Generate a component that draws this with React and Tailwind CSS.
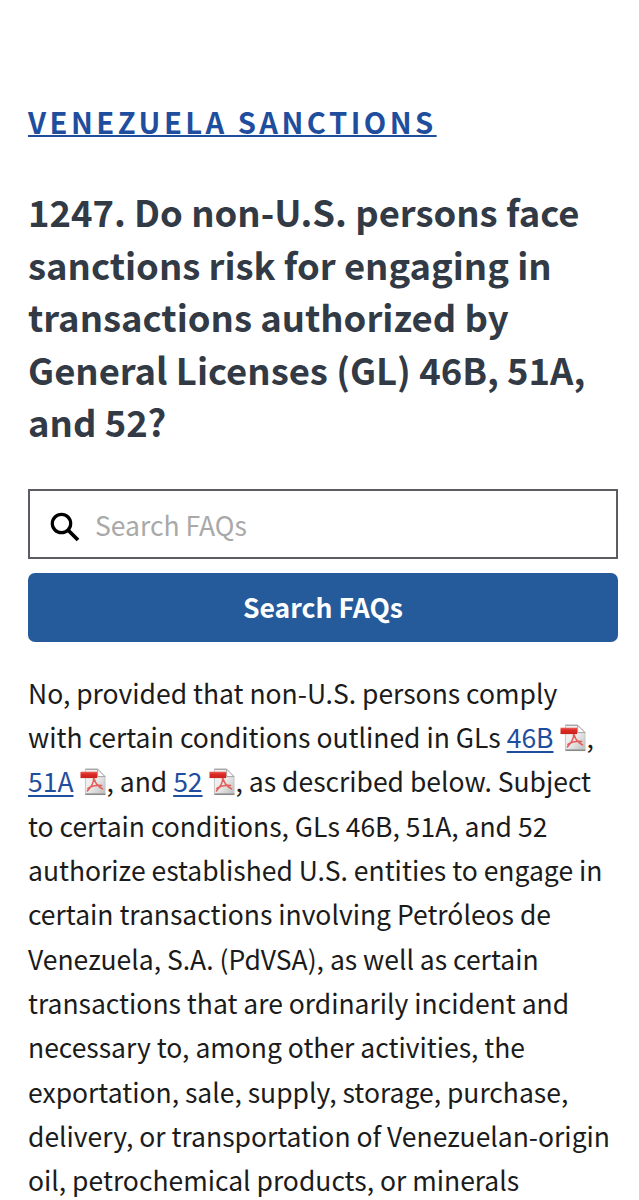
import React from 'react';

const title = [
  '1247. Do non-U.S. persons face',
  'sanctions risk for engaging in',
  'transactions authorized by',
  'General Licenses (GL) 46B, 51A,',
  'and 52?',
];

const rest = [
  'to certain conditions, GLs 46B, 51A, and 52',
  'authorize established U.S. entities to engage in',
  'certain transactions involving Petróleos de',
  'Venezuela, S.A. (PdVSA), as well as certain',
  'transactions that are ordinarily incident and',
  'necessary to, among other activities, the',
  'exportation, sale, supply, storage, purchase,',
  'delivery, or transportation of Venezuelan-origin',
  'oil, petrochemical products, or minerals',
];

function PdfIcon() {
  return (
    <svg className="ml-[6.5px] inline-block h-[28px] w-[26.5px] align-[-4px]" viewBox="0 0 27 28">
      <defs>
        <linearGradient id="page" x1="0" y1="0" x2="1" y2="1">
          <stop offset="0" stopColor="#f4f4f4" />
          <stop offset="0.5" stopColor="#ececec" />
          <stop offset="1" stopColor="#bdbdbd" />
        </linearGradient>
        <linearGradient id="band" x1="0" y1="0" x2="0" y2="1">
          <stop offset="0" stopColor="#ec5f57" />
          <stop offset="0.4" stopColor="#dc2b25" />
          <stop offset="1" stopColor="#c9211b" />
        </linearGradient>
      </defs>
      <path d="M5.5 1H18l7.5 7.5V26H5.5z" fill="url(#page)" stroke="#c4c4c4" strokeWidth="1" />
      <path d="M5.5 1H18" stroke="#a0a0a0" strokeWidth="1.2" />
      <path d="M5.5 26.5H26" stroke="#8a8a8a" strokeWidth="1.6" />
      <path d="M18 1v7.5h7.5z" fill="#fff" stroke="#a0a0a0" strokeWidth="1" />
      <path d="M14 9c.3 5-2 9.5-6.500 14M14.5 11c1 4 3.500 7.500 8.500 10M8 20.5c4-2.500 9-3.500 14-3" fill="none" stroke="#e35f5b" strokeWidth="1.6" strokeLinecap="round" />
      <rect x="0.5" y="3.5" width="17" height="6.5" fill="url(#band)" />
    </svg>
  );
}

function GlLink({ children }) {
  return (
    <>
      <a href="#" className="text-[#1f4e9e] underline decoration-2 underline-offset-[3px] [text-decoration-skip-ink:none]">{children}</a>
      <PdfIcon />
    </>
  );
}

export default function App() {
  return (
    <div className="h-[1200px] overflow-hidden bg-white pr-[21px] pl-7 pt-[95px] font-['Noto_Sans_CJK_SC',sans-serif] text-[#1b1b1b]">
      <a href="#" className="block text-[29.2px] leading-[53px] font-bold tracking-[3.45px] whitespace-nowrap text-[#1f4e9e] underline decoration-2 underline-offset-[1px] [text-decoration-skip-ink:none]">
        VENEZUELA SANCTIONS
      </a>
      <h1 className="mt-[37px] text-[36.45px] leading-[52.5px] font-bold whitespace-nowrap text-[#323a45]">
        {title.map((line) => <span key={line} className="block">{line}</span>)}
      </h1>

      <form className="mt-[41.5px]">
        <div className="flex h-[70px] items-center border-2 border-[#5c5d63] pl-[20px]">
          <svg className="mt-[6px] h-[31px] w-[31px] shrink-0" viewBox="0 0 31 31" fill="none" stroke="#000">
            <circle cx="11.5" cy="11.5" r="9.2" strokeWidth="3.2" />
            <path d="M18 18l10 10" strokeWidth="3.8" />
          </svg>
          <input className="mt-[1px] ml-[14px] min-w-0 flex-1 text-[26.5px] outline-none placeholder:text-[#a9a9a9]" placeholder="Search FAQs" />
        </div>
        <button type="button" className="mt-[14px] h-[69px] w-full rounded-[7px] bg-[#265b9b] pb-[1px] text-[26.5px] font-bold text-white">
          Search FAQs
        </button>
      </form>

      <p className="mt-[28.5px] text-[26.48px] leading-[44.35px] whitespace-nowrap">
        No, provided that non-U.S. persons comply<br />
        with certain conditions outlined in GLs <GlLink>46B</GlLink>,<br />
        <GlLink>51A</GlLink>, and <GlLink>52</GlLink>, as described below. Subject<br />
        {rest.map((line) => <span key={line} className="block">{line}</span>)}
      </p>
    </div>
  );
}
